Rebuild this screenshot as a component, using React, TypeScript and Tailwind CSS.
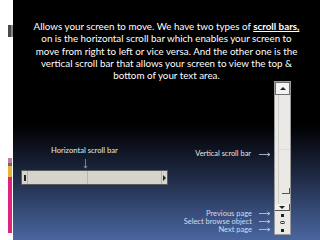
const font = { fontFamily: "Lato, 'Open Sans', sans-serif" };

const Arrow = () => (
  <svg width="12" height="5" viewBox="0 0 12 5" className="shrink-0">
    <path d="M0 2.5h10.5M8.5 0.8l2.5 1.7-2.5 1.7" stroke="#c9d2e6" strokeWidth="0.8" fill="none" />
  </svg>
);

function HScrollBar() {
  return (
    <div className="flex h-[15px] w-[147px] border border-[#5c5c5c] bg-[#d6d3cc]">
      <div className="flex w-[6px] items-center justify-center border-r border-[#b5b2ab]">
        <div className="h-[6px] w-[2px] bg-[#222]" />
      </div>
      <div className="w-[60px] border-r border-[#b9b6af]" />
      <div className="flex-1" />
      <div className="flex w-[6px] items-center justify-center border-l border-[#b5b2ab]">
        <svg width="3" height="6" viewBox="0 0 3 6"><path d="M0 0l3 3-3 3z" fill="#222" /></svg>
      </div>
    </div>
  );
}

function VScrollBar() {
  return (
    <div className="flex h-[154px] w-[17px] flex-col border border-[#9a9a9a] bg-[#ebe9e5]">
      <div className="flex h-[13px] items-center justify-center border border-[#6e6e6e] bg-[#f4f3f1]">
        <svg width="6" height="3" viewBox="0 0 6 3"><path d="M0 3l3-3 3 3z" fill="#222" /></svg>
      </div>
      <div className="flex flex-1 flex-col">
        <div className="ml-[3px] flex h-[93px] flex-col border-l border-[#cfcdc8]">
          <div className="mt-[54px] h-px bg-[#dddbd6]" />
        </div>
        <div className="ml-[3px] h-[13px] border-l border-[#cfcdc8]">
          <div className="ml-auto h-[6px] w-[8px] border-b border-r border-[#555]" />
        </div>
        <div className="ml-[3px] flex-1 border-l border-[#cfcdc8]" />
      </div>
      <div className="flex h-[7px] items-center justify-center border-b border-r border-[#555] bg-[#f2f1ee]">
        <svg width="6" height="3" viewBox="0 0 6 3"><path d="M0 0l3 3 3-3z" fill="#222" /></svg>
      </div>
      <div className="flex h-[8px] items-center justify-center">
        <div className="h-[3px] w-[3px] bg-[#222]" />
      </div>
      <div className="flex h-[7px] items-center justify-center">
        <div className="h-[3px] w-[5px] rounded-full border border-[#222]" />
      </div>
      <div className="flex h-[8px] items-center justify-center">
        <div className="h-[3px] w-[3px] bg-[#222]" />
      </div>
    </div>
  );
}

export default function App() {
  return (
    <div className="flex h-[240px] w-[320px] overflow-hidden bg-white" style={font}>
      <div className="flex w-[13px] flex-col pl-[8px]">
        <div className="mt-[25px] h-[12px] w-[5px] border-r-2 border-[#888] bg-[#4a4a4a]" />
        <div className="mt-[121px] h-[5px] w-[4px] bg-[#c77a9c]" />
        <div className="h-[3px] w-[4px] bg-[#5a6e80]" />
        <div className="h-[11px] w-[4px] bg-[#e8b33a]" />
        <div className="h-[56px] w-[4px] bg-[#e0247e]" />
      </div>
      <div className="flex flex-1 flex-col bg-[linear-gradient(180deg,#000_0%,#000_52%,#1c2740_72%,#4a66a0_100%)]">
        <p className="whitespace-nowrap pt-[20px] text-center text-[9.8px] leading-[12.3px] text-white">
          Allows your screen to move. We have two types of{" "}
          <span className="font-bold underline">scroll bars,</span>
          <br />
          on is the horizontal scroll bar which enables your screen to
          <br />
          move from right to left or vice versa. And the other one is the
          <br />
          vertical scroll bar that allows your screen to view the top &amp;
          <br />
          bottom of your text area.
        </p>
        <div className="flex flex-1 items-end">
          <div className="mb-[57px] ml-[8px] flex w-[147px] flex-col items-start">
            <div className="ml-[30px] text-[7.6px] leading-[9px] text-[#e8e8e8]">Horizontal scroll bar</div>
            <svg width="5" height="10" viewBox="0 0 5 10" className="ml-[62px] mt-[4px] mb-[1px]">
              <path d="M2.5 0v9M0.8 6.8l1.7 2.4 1.7-2.4" stroke="#aaa" strokeWidth="0.7" fill="none" />
            </svg>
            <HScrollBar />
          </div>
          <div className="flex flex-1 flex-col items-end pb-[9px] pr-[3px]">
            <div className="flex items-center gap-[8px] text-[7.4px] leading-[8px] text-[#e6e6e6]">
              Vertical scroll bar <Arrow />
            </div>
            <div className="mt-[52px] flex flex-col items-end text-[7.5px] leading-[7.8px] text-[#d4dcef]">
              <div className="flex items-center gap-[7px]">Previous page <Arrow /></div>
              <div className="flex items-center gap-[7px]">Select browse object <Arrow /></div>
              <div className="flex items-center gap-[7px]">Next page <Arrow /></div>
            </div>
          </div>
          <div className="mb-[7px] mr-[29px]">
            <VScrollBar />
          </div>
        </div>
      </div>
    </div>
  );
}
